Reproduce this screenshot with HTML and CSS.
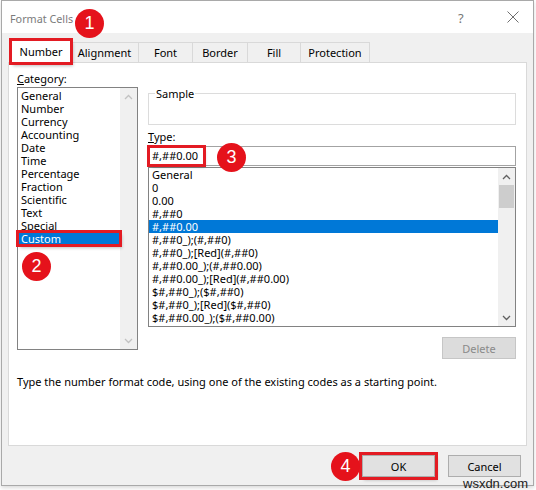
FILE: index.html
```html
<!DOCTYPE html>
<html>
<head>
<meta charset="utf-8">
<link rel="stylesheet" href="styles.css">
</head>
<body>
<div class="dialog">
  <div class="titlebar">
    <span class="title">Format Cells</span>
    <span class="help">?</span>
    <span class="close"><svg width="12" height="12" viewBox="0 0 12 12"><path d="M0.5 0.5L11.5 11.5M11.5 0.5L0.5 11.5" stroke="#6f6f6f" stroke-width="1" fill="none"/></svg></span>
  </div>
  <div class="body">
    <div class="tabs">
      <div class="tab active marked">Number</div>
      <div class="tab w-align">Alignment</div>
      <div class="tab w-font">Font</div>
      <div class="tab w-border">Border</div>
      <div class="tab w-fill">Fill</div>
      <div class="tab w-prot">Protection</div>
    </div>
    <div class="panel">
      <div class="cols">
        <div class="left">
          <div class="label"><u>C</u>ategory:</div>
          <div class="listbox cat">
            <ul class="items">
              <li>General</li>
              <li>Number</li>
              <li>Currency</li>
              <li>Accounting</li>
              <li>Date</li>
              <li>Time</li>
              <li>Percentage</li>
              <li>Fraction</li>
              <li>Scientific</li>
              <li>Text</li>
              <li>Special</li>
              <li class="sel marked">Custom</li>
            </ul>
            <div class="vscroll off">
              <span class="arrow"><svg width="9" height="6" viewBox="0 0 9 6"><path d="M1 5L4.5 1.5L8 5" stroke="#c2c2c2" stroke-width="1.3" fill="none"/></svg></span>
              <span class="track"></span>
              <span class="arrow"><svg width="9" height="6" viewBox="0 0 9 6"><path d="M1 1L4.5 4.5L8 1" stroke="#c2c2c2" stroke-width="1.3" fill="none"/></svg></span>
            </div>
          </div>
        </div>
        <div class="right">
          <fieldset class="sample"><legend>Sample</legend></fieldset>
          <div class="label type-label"><u>T</u>ype:</div>
          <div class="typebox"><span class="typed marked">#,##0.00</span></div>
          <div class="listbox fmt">
            <ul class="items">
              <li>General</li>
              <li>0</li>
              <li>0.00</li>
              <li>#,##0</li>
              <li class="sel">#,##0.00</li>
              <li>#,##0_);(#,##0)</li>
              <li>#,##0_);[Red](#,##0)</li>
              <li>#,##0.00_);(#,##0.00)</li>
              <li>#,##0.00_);[Red](#,##0.00)</li>
              <li>$#,##0_);($#,##0)</li>
              <li>$#,##0_);[Red]($#,##0)</li>
              <li>$#,##0.00_);($#,##0.00)</li>
            </ul>
            <div class="vscroll">
              <span class="arrow"><svg width="9" height="6" viewBox="0 0 9 6"><path d="M1 5L4.5 1.5L8 5" stroke="#606060" stroke-width="1.3" fill="none"/></svg></span>
              <span class="track"><span class="thumb"></span></span>
              <span class="arrow"><svg width="9" height="6" viewBox="0 0 9 6"><path d="M1 1L4.5 4.5L8 1" stroke="#606060" stroke-width="1.3" fill="none"/></svg></span>
            </div>
          </div>
          <div class="del-row"><span class="btn disabled">Delete</span></div>
        </div>
      </div>
      <p class="hint">Type the number format code, using one of the existing codes as a starting point.</p>
    </div>
    <div class="footer">
      <span class="btn ok marked">OK</span>
      <span class="btn">Cancel</span>
    </div>
  </div>
</div>
<span class="badge b1">1</span>
<span class="badge b2">2</span>
<span class="badge b3">3</span>
<span class="badge b4">4</span>
<span class="watermark">wsxdn.com</span>
</body>
</html>
```
FILE: styles.css
```css
* { box-sizing: border-box; }
html, body { margin: 0; padding: 0; }
body {
  width: 536px;
  height: 490px;
  background: #ffffff;
  font-family: "Noto Sans", "Open Sans", sans-serif;
  font-size: 11px;
  color: #000;
  overflow: hidden;
}
.dialog {
  margin-left: 1px;
  width: 533px;
  height: 486px;
  border: 1px solid #a9a9a9;
  background: #f0f0f0;
  display: flex;
  flex-direction: column;
  box-shadow: 0 2px 4px rgba(0,0,0,0.15);
}
.titlebar {
  height: 32px;
  background: #ffffff;
  display: flex;
  align-items: center;
  padding-left: 8px;
  color: #7b7b7b;
  font-size: 10.8px;
}
.title { flex: 1; padding-top: 2px; }
.help { width: 12px; margin-right: 37px; color: #777; font-size: 13px; padding-top: 2px; }
.close { width: 12px; margin-right: 14px; display: flex; }
.body {
  flex: 1;
  padding: 8px 6px 0 6px;
  display: flex;
  flex-direction: column;
}
.tabs {
  display: flex;
  height: 21px;
  padding-left: 3px;
  align-items: flex-end;
  position: relative;
  z-index: 1;
}
.tab {
  height: 20px;
  border: 1px solid #d9d9d9;
  border-bottom: none;
  border-left: none;
  display: flex;
  align-items: center;
  justify-content: center;
  line-height: 13px;
  background: #f0f0f0;
}
.tab.active {
  width: 60px;
  height: 23px;
  margin-bottom: -1px;
  background: #fff;
  border-left: 1px solid #d9d9d9;
  padding-bottom: 2px;
}
.w-align { width: 68px; }
.w-font { width: 54px; }
.w-border { width: 55px; }
.w-fill { width: 53px; }
.w-prot { width: 69px; }
.marked {
  outline: 3px solid #e31b23;
  outline-offset: -1px;
  box-shadow: 2px 3px 3px rgba(0,0,0,0.25);
  position: relative;
  z-index: 2;
}
.panel {
  width: 519px;
  height: 384px;
  background: #fff;
  border: 1px solid #d9d9d9;
  padding: 9px 8px 0 8px;
}
.cols {
  display: flex;
  gap: 10px;
  align-items: flex-start;
}
.left { width: 121px; }
.right { width: 368px; }
.label { line-height: 13px; height: 13px; margin-bottom: 2px; }
.label u { text-decoration-thickness: 1px; text-underline-offset: 1px; }
.listbox {
  border: 1px solid #828282;
  display: flex;
  background: #fff;
}
.listbox.cat { height: 263px; }
.listbox.fmt { height: 160px; margin-top: 1px; }
.items {
  list-style: none;
  margin: 0;
  padding: 1px 0 0 0;
  flex: 1;
  min-width: 0;
}
.fmt .items { padding-top: 0; overflow: hidden; }
.items li {
  height: 13px;
  line-height: 13px;
  padding-left: 3px;
  white-space: nowrap;
}
.items li.sel { background: #0078d7; color: #fff; }
.vscroll {
  width: 17px;
  background: #f0f0f0;
  display: flex;
  flex-direction: column;
}
.vscroll .arrow {
  height: 17px;
  display: flex;
  align-items: center;
  justify-content: center;
}
.vscroll .track { flex: 1; position: relative; }
.thumb {
  display: block;
  margin: 0 1px;
  height: 23px;
  background: #cdcdcd;
}
.sample {
  margin: 15px 0 0 0;
  padding: 0 6px;
  height: 38px;
  border: 1px solid #dcdcdc;
  min-width: 0;
}
.sample legend { padding: 0 1px; line-height: 13px; }
.type-label { margin-top: 5px; margin-bottom: 3px; }
.typebox {
  height: 20px;
  border: 1px solid #a3a3a3;
  padding: 1px 1px;
  display: flex;
}
.typed {
  display: inline-block;
  height: 16px;
  line-height: 16px;
  padding: 0 5px 0 2px;
  outline-offset: 0px;
}
.del-row { display: flex; justify-content: flex-end; margin-top: 10px; }
.btn {
  display: inline-flex;
  align-items: center;
  justify-content: center;
  width: 73px;
  height: 22px;
  background: #e1e1e1;
  border: 1px solid #adadad;
}
.btn.disabled {
  background: #dcdcdc;
  border-color: #c6c6c6;
  color: #8a8a8a;
  width: 74px;
}
.hint { margin: 16px 0 0 0; line-height: 13px; }
.footer {
  display: flex;
  justify-content: flex-end;
  gap: 13px;
  padding: 10px 6px 0 0;
  margin-top: -1px;
}
.btn.ok { outline-offset: 0; }
.badge {
  position: absolute;
  width: 29px;
  height: 29px;
  border-radius: 50%;
  background: #e5121b;
  color: #fff;
  font-family: "Liberation Sans", Arial, sans-serif;
  font-size: 18px;
  display: flex;
  align-items: center;
  justify-content: center;
  z-index: 5;
}
.b1 { left: 75px; top: 9px; }
.b2 { left: 22px; top: 252px; }
.b3 { left: 217px; top: 143px; }
.b4 { left: 331px; top: 452px; }
.watermark {
  position: absolute;
  left: 463px;
  top: 476px;
  font-family: "Liberation Sans", Arial, sans-serif;
  font-size: 13px;
  color: #1c1c1c;
  z-index: 5;
}
```
